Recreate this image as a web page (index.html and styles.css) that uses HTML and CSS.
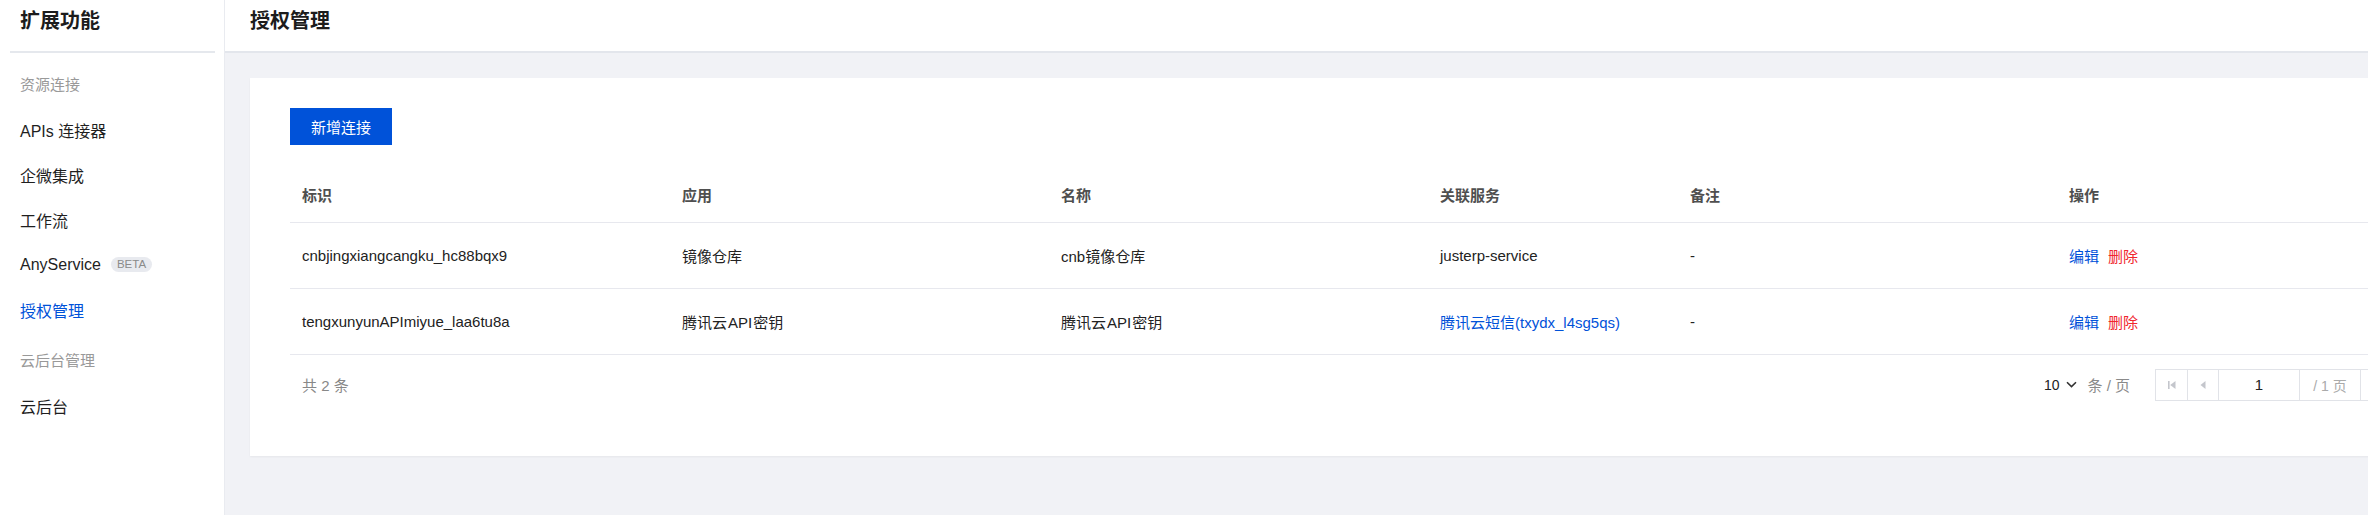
FILE: index.html
```html
<!DOCTYPE html>
<html lang="zh-CN">
<head>
<meta charset="utf-8">
<title>授权管理</title>
<link rel="stylesheet" href="styles.css">
</head>
<body>
<div class="app">
  <aside class="sidebar">
    <div class="side-title">扩展功能</div>
    <div class="side-divider"></div>
    <div class="side-group">资源连接</div>
    <div class="side-item">APIs 连接器</div>
    <div class="side-item">企微集成</div>
    <div class="side-item">工作流</div>
    <div class="side-item">AnyService <span class="badge">BETA</span></div>
    <div class="side-item active">授权管理</div>
    <div class="side-group second">云后台管理</div>
    <div class="side-item">云后台</div>
  </aside>
  <main class="main">
    <header class="page-header">
      <h1 class="page-title">授权管理</h1>
    </header>
    <section class="content">
      <div class="card">
        <button class="btn-primary" type="button">新增连接</button>
        <table class="table">
          <colgroup>
            <col class="c-id">
            <col class="c-app">
            <col class="c-name">
            <col class="c-svc">
            <col class="c-note">
            <col class="c-op">
            <col class="c-rest">
          </colgroup>
          <thead>
            <tr>
              <th>标识</th>
              <th>应用</th>
              <th>名称</th>
              <th>关联服务</th>
              <th>备注</th>
              <th>操作</th>
              <th></th>
            </tr>
          </thead>
          <tbody>
            <tr>
              <td>cnbjingxiangcangku_hc88bqx9</td>
              <td>镜像仓库</td>
              <td>cnb镜像仓库</td>
              <td>justerp-service</td>
              <td>-</td>
              <td><a class="link">编辑</a><a class="link danger">删除</a></td>
              <td></td>
            </tr>
            <tr>
              <td>tengxunyunAPImiyue_laa6tu8a</td>
              <td>腾讯云<span class="latin">API</span>密钥</td>
              <td>腾讯云<span class="latin">API</span>密钥</td>
              <td><a class="link">腾讯云短信(txydx_l4sg5qs)</a></td>
              <td>-</td>
              <td><a class="link">编辑</a><a class="link danger">删除</a></td>
              <td></td>
            </tr>
          </tbody>
        </table>
        <div class="pager">
          <div class="total">共 2 条</div>
          <div class="pager-right">
            <div class="size">10
              <svg class="chev" width="11" height="7" viewBox="0 0 11 7"><path d="M1 1.2 L5.5 5.6 L10 1.2" fill="none" stroke="#333" stroke-width="1.6"/></svg>
              <span class="size-unit">条 / 页</span>
            </div>
            <div class="pages">
              <span class="pbtn"><svg width="10" height="10" viewBox="0 0 10 10"><rect x="1" y="1" width="1.6" height="8" fill="#c4c6cc"/><path d="M8.5 1 L3.2 5 L8.5 9 Z" fill="#c4c6cc"/></svg></span>
              <span class="pbtn"><svg width="10" height="10" viewBox="0 0 10 10"><path d="M7.5 1 L2.5 5 L7.5 9 Z" fill="#c4c6cc"/></svg></span>
              <span class="pinput">1</span>
              <span class="ptotal">/ 1 页</span>
              <span class="pbtn"><svg width="10" height="10" viewBox="0 0 10 10"><path d="M2.5 1 L7.5 5 L2.5 9 Z" fill="#c4c6cc"/></svg></span>
              <span class="pbtn"><svg width="10" height="10" viewBox="0 0 10 10"><path d="M1.5 1 L6.8 5 L1.5 9 Z" fill="#c4c6cc"/><rect x="7.4" y="1" width="1.6" height="8" fill="#c4c6cc"/></svg></span>
            </div>
          </div>
        </div>
      </div>
    </section>
  </main>
</div>
</body>
</html>
```
FILE: styles.css
```css
* { box-sizing: border-box; }
html, body {
  margin: 0;
  padding: 0;
  overflow: hidden;
  background: #f1f2f6;
}
body {
  font-family: "Liberation Sans", "Noto Sans CJK SC", sans-serif;
  color: #222;
  width: 2368px;
  height: 515px;
}
.app {
  display: flex;
  height: 515px;
}
.sidebar {
  flex: 0 0 225px;
  width: 225px;
  background: #fff;
  border-right: 1px solid #e9ebf0;
}
.side-title {
  height: 42px;
  line-height: 42px;
  padding-left: 20px;
  font-size: 20px;
  font-weight: 700;
  color: #1c1c1c;
}
.side-divider {
  height: 2px;
  margin: 9px 9px 0 10px;
  background: #e5e8ed;
}
.side-group {
  height: 45px;
  line-height: 45px;
  margin-top: 9px;
  padding-left: 20px;
  font-size: 15px;
  color: #999;
}
.side-group.second { margin-top: 6px; }
.side-item {
  height: 45px;
  display: flex;
  align-items: center;
  padding-left: 20px;
  font-size: 16px;
  color: #1f1f1f;
}
.side-item.active { color: #0052d9; }
.badge {
  display: inline-block;
  margin-left: 10px;
  height: 15px;
  line-height: 15px;
  padding: 0 6px;
  border-radius: 8px;
  background: #e8eaef;
  color: #8a8a8a;
  font-size: 11.5px;
}
.main {
  flex: 1 1 auto;
  min-width: 0;
  display: flex;
  flex-direction: column;
}
.page-header {
  height: 53px;
  background: #fff;
  border-bottom: 2px solid #e3e6ec;
  padding-left: 25px;
}
.page-title {
  margin: 0;
  height: 42px;
  line-height: 42px;
  font-size: 20px;
  font-weight: 700;
  color: #1c1c1c;
}
.content {
  padding: 25px;
}
.card {
  width: 2213px;
  background: #fff;
  padding: 30px 40px 55px;
  box-shadow: 0 1px 2px rgba(0, 0, 0, 0.05);
}
.btn-primary {
  display: block;
  width: 102px;
  height: 37px;
  border: 0;
  border-radius: 0;
  background: #0052d9;
  color: #fff;
  font-family: inherit;
  font-size: 15px;
  padding: 0;
}
.table {
  margin-top: 23px;
  width: 2133px;
  table-layout: fixed;
  border-collapse: collapse;
  font-size: 15px;
}
.c-id { width: 380px; }
.c-app { width: 379px; }
.c-name { width: 379px; }
.c-svc { width: 250px; }
.c-note { width: 379px; }
.c-op { width: 200px; }
.c-rest { width: 166px; }
.table th {
  height: 54px;
  padding: 0 12px;
  text-align: left;
  font-weight: 600;
  color: #4f4f4f;
  border-bottom: 1px solid #e7e8ee;
}
.table td {
  height: 66px;
  padding: 0 12px;
  color: #222;
  border-bottom: 1px solid #e7e8ee;
  white-space: nowrap;
}
.latin { margin: 0 1px; }
.link {
  color: #0052d9;
  cursor: pointer;
}
.link + .link { margin-left: 9px; }
.link.danger { color: #f0262d; }
.pager {
  display: flex;
  justify-content: space-between;
  align-items: center;
  padding: 14px 0 0 12px;
  font-size: 15px;
}
.total { color: #888; }
.pager-right {
  display: flex;
  align-items: center;
  font-size: 14px;
}
.size {
  display: flex;
  align-items: center;
  color: #222;
  margin-right: 25px;
  font-size: 14px;
}
.chev { margin-left: 7px; }
.size-unit {
  margin-left: 10px;
  color: #8a8a8a;
  font-size: 15px;
}
.pages {
  display: flex;
  height: 32px;
  border: 1px solid #e1e3e8;
}
.pages > span {
  display: flex;
  align-items: center;
  justify-content: center;
  border-left: 1px solid #e1e3e8;
}
.pages > span:first-child { border-left: 0; }
.pbtn { width: 31px; }
.pinput {
  width: 81px;
  color: #222;
  font-size: 15px;
}
.ptotal {
  width: 61px;
  color: #aaa;
}
```
